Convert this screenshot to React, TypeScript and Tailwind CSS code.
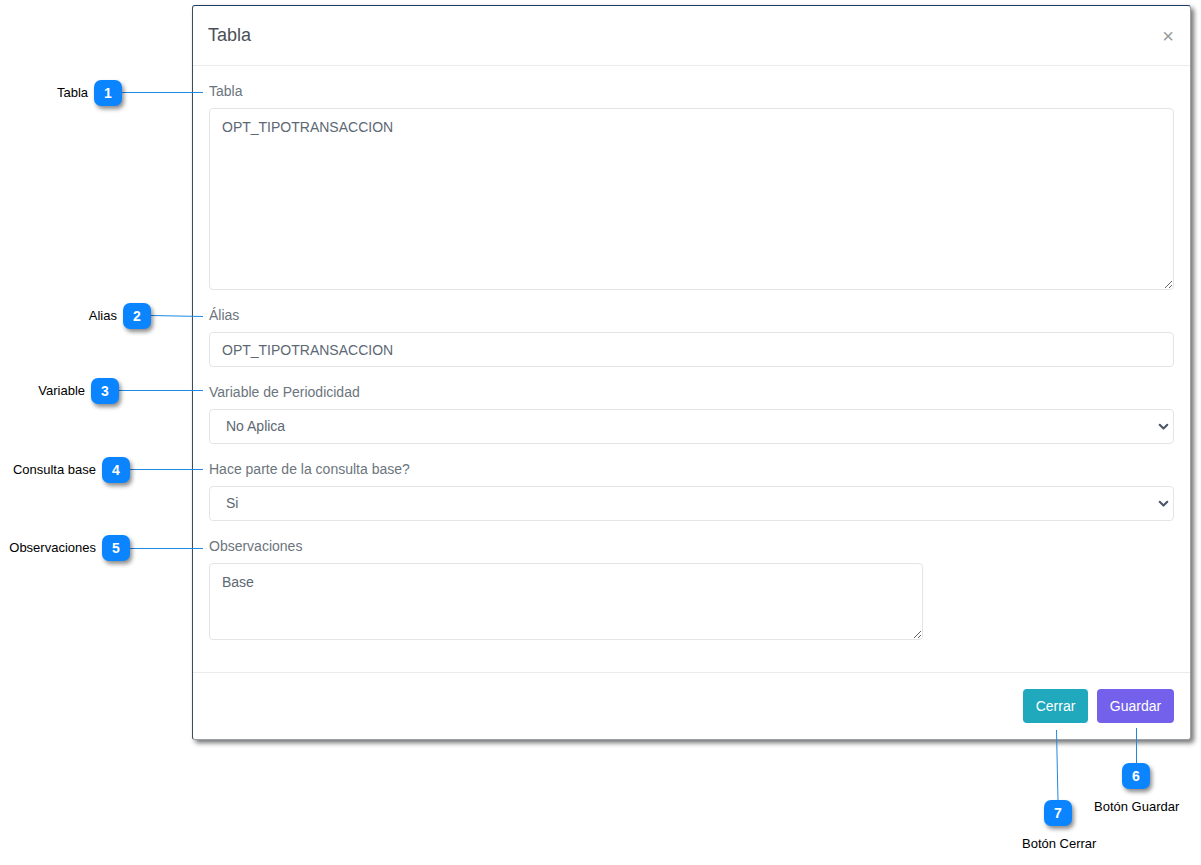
import React from "react";

const font = { fontFamily: '"Liberation Sans", Arial, sans-serif' };

function Badge({ n, x, y, label }: { n: string; x: number; y: number; label?: string }) {
  return (
    <div className="absolute" style={{ left: x, top: y }}>
      <div className="relative flex h-[26px] w-[28px] items-center justify-center rounded-[7px] bg-[#0a84ff] text-[14px] font-bold text-white shadow-[2px_3px_4px_rgba(0,0,0,0.45)]">
        {n}
        {label && (
          <span className="absolute right-full top-1/2 mr-[6px] -translate-y-1/2 whitespace-nowrap text-[13px] font-normal text-black">
            {label}
          </span>
        )}
      </div>
    </div>
  );
}

function Chevron() {
  return (
    <svg width="11" height="11" viewBox="0 0 16 16" className="text-[#4a5568]">
      <path d="M2.5 5.5l5.5 5.5 5.5-5.5" fill="none" stroke="currentColor" strokeWidth="3" strokeLinecap="round" strokeLinejoin="round" />
    </svg>
  );
}

function Label({ children }: { children: React.ReactNode }) {
  return <div className="mb-[8px] text-[14px] leading-[18px] text-[#6c757d]">{children}</div>;
}

function Select({ value }: { value: string }) {
  return (
    <div className="flex h-[35px] items-center justify-between rounded-[4px] border border-[#e2e5e8] bg-white pl-[16px] pr-[4px] text-[14px] text-[#5c6873]">
      <span>{value}</span>
      <Chevron />
    </div>
  );
}

export default function App() {
  return (
    <div className="relative h-[865px] w-[1201px] overflow-hidden bg-white" style={font}>
      <div className="ml-[192px] mt-[5px] w-[999px] rounded-[3px] border border-[#9aa0a6] border-l-[#3e4a57] border-t-[#1c3d63] bg-white shadow-[3px_3px_5px_rgba(0,0,0,0.55)]">
        <div className="flex h-[60px] items-center justify-between border-b border-[#e9ecef] px-[15px]">
          <div className="text-[18px] text-[#495057]">Tabla</div>
          <div className="mr-[1px] text-[20px] leading-none text-[#9a9a9a]">×</div>
        </div>
        <div className="p-4">
          <div className="mb-4">
            <Label>Tabla</Label>
            <textarea
              readOnly
              defaultValue="OPT_TIPOTRANSACCION"
              className="block h-[182px] w-full rounded-[4px] border border-[#e2e5e8] px-[12px] py-[8px] text-[14px] text-[#5c6873] outline-none"
              style={font}
            />
          </div>
          <div className="mb-4">
            <Label>Álias</Label>
            <input
              readOnly
              defaultValue="OPT_TIPOTRANSACCION"
              className="block h-[35px] w-full rounded-[4px] border border-[#e2e5e8] px-[12px] text-[14px] text-[#5c6873] outline-none"
              style={font}
            />
          </div>
          <div className="mb-4">
            <Label>Variable de Periodicidad</Label>
            <Select value="No Aplica" />
          </div>
          <div className="mb-4">
            <Label>Hace parte de la consulta base?</Label>
            <Select value="Si" />
          </div>
          <div className="mb-4">
            <Label>Observaciones</Label>
            <textarea
              readOnly
              defaultValue="Base"
              className="block h-[77px] w-[714px] rounded-[4px] border border-[#e2e5e8] px-[12px] py-[8px] text-[14px] text-[#5c6873] outline-none"
              style={font}
            />
          </div>
        </div>
        <div className="flex h-[67px] items-center justify-end gap-[9px] border-t border-[#e9ecef] px-4">
          <button className="h-[34px] w-[65px] rounded-[4px] bg-[#20a8bd] text-[14px] text-white">Cerrar</button>
          <button className="h-[34px] w-[77px] rounded-[4px] bg-[#7361ec] text-[14px] text-white">Guardar</button>
        </div>
      </div>

      <svg className="pointer-events-none absolute left-0 top-0" width="1201" height="865">
        <g stroke="#1e88e5" strokeWidth="1" fill="none">
          <line x1="121" y1="92.5" x2="203" y2="92.5" />
          <line x1="151" y1="315.5" x2="203" y2="316.5" />
          <line x1="118" y1="390.5" x2="203" y2="390.5" />
          <line x1="130" y1="469.5" x2="203" y2="469.5" />
          <line x1="130" y1="548.5" x2="203" y2="548.5" />
          <line x1="1136.5" y1="728" x2="1136.5" y2="764" />
          <line x1="1056.5" y1="730" x2="1058" y2="801" />
        </g>
      </svg>

      <Badge n="1" x={94} y={80} label="Tabla" />
      <Badge n="2" x={123} y={303} label="Alias" />
      <Badge n="3" x={91} y={378} label="Variable" />
      <Badge n="4" x={102} y={457} label="Consulta base" />
      <Badge n="5" x={102} y={535} label="Observaciones" />
      <Badge n="6" x={1122} y={763} />
      <Badge n="7" x={1044} y={800} />
      <div className="absolute left-[1094px] top-[797px] whitespace-nowrap text-[13px] text-black">Botón Guardar</div>
      <div className="absolute left-[1022px] top-[834px] whitespace-nowrap text-[13px] text-black">Botón Cerrar</div>
    </div>
  );
}
